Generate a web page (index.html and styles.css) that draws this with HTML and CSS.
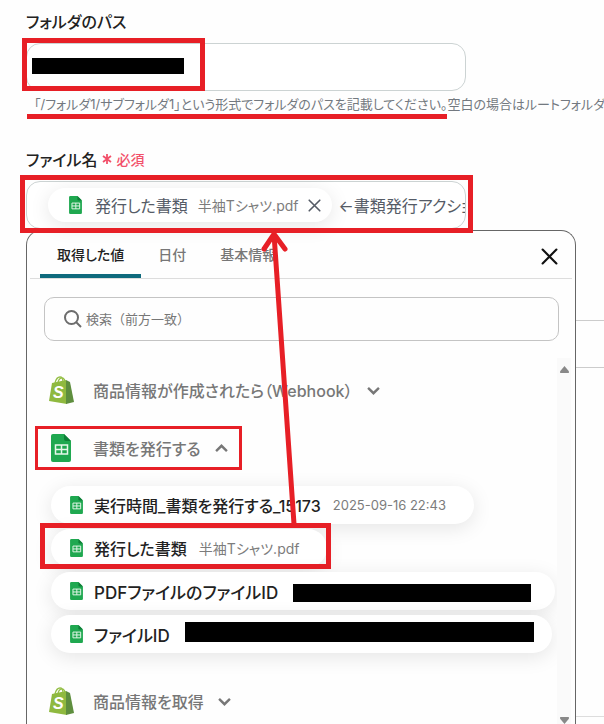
FILE: index.html
```
<!DOCTYPE html>
<html lang="ja">
  <head>
    <meta charset="UTF-8" />
    <meta name="viewport" content="width=device-width, initial-scale=1.0" />
    <title>ファイルアップロード設定</title>
    <link rel="stylesheet" href="styles.css">
  </head>
  <body>
    <!-- shared icons -->
    <svg class="sprite" aria-hidden="true">
      <symbol id="sheet" viewBox="0 0 20 28">
        <path d="M2 0h11l7 7v19a2 2 0 0 1-2 2H2a2 2 0 0 1-2-2V2a2 2 0 0 1 2-2z" fill="#1fa850"/>
        <path d="M13 0l7 7h-5a2 2 0 0 1-2-2z" fill="#0f7f38"/>
        <path d="M4.500 11h12v9h-12zM4.500 15.500h12M10.500 11v9" fill="none" stroke="#e6f7ea" stroke-width="1.500"/>
      </symbol>
      <symbol id="shop" viewBox="0 0 25 28">
        <path d="M6 7c1-4 3-6 5-6s3 2 3 5M9 6c1-3 3-5 5-4s2 2 2 4" fill="none" stroke="#95bf47" stroke-width="1.300"/>
        <path d="M3 7l14-3 1 24L0 25z" fill="#8fb93f"/>
        <path d="M17 4l4 2 4 20-8 2z" fill="#5e8e3e"/>
        <text x="4" y="22" font-size="16" font-weight="700" font-style="italic" font-family="Liberation Sans, sans-serif" fill="#fff">S</text>
      </symbol>
      <symbol id="cross" viewBox="0 0 16 16">
        <path d="M1.500 1.500l13 13M14.500 1.500l-13 13" fill="none" stroke="currentColor" stroke-width="2" stroke-linecap="round"/>
      </symbol>
      <symbol id="chevron" viewBox="0 0 12 8">
        <path d="M1 1.500l5 5 5-5" fill="none" stroke="currentColor" stroke-width="2.200"/>
      </symbol>
    </svg>

    <main class="page">
      <section class="field">
        <label class="label" for="path">フォルダのパス</label>
        <div class="box">
          <input class="box-input" id="path" type="text">
          <span class="mask mask-path"></span>
          <span class="mark mark-path"></span>
        </div>
        <p class="help"><span class="underlined">「/フォルダ1/サブフォルダ1」という形式でフォルダのパスを記載してください。</span>空白の場合はルートフォルダへ</p>
      </section>

      <section class="field field-name">
        <label class="label" for="name">ファイル名 <span class="required"><svg class="star" viewBox="0 0 10 10"><path d="M5 0v10M1 2l8 6M9 2L1 8" stroke="currentColor" stroke-width="1.800"/></svg>必須</span></label>
        <div class="box">
          <span class="chip">
            <svg class="icon-small"><use href="#sheet"/></svg>
            発行した書類
            <small class="value">半袖Tシャツ.pdf</small>
            <button class="chip-remove" type="button" aria-label="削除"><svg><use href="#cross"/></svg></button>
          </span>
          <input class="box-input" id="name" type="text" value="←書類発行アクション">
          <span class="mark mark-name"></span>
        </div>
      </section>

      <div class="behind-box"></div>
      <div class="behind-line"></div>

      <div class="panel">
        <div class="tabs">
          <button class="tab active" type="button">取得した値</button>
          <button class="tab" type="button">日付</button>
          <button class="tab" type="button">基本情報</button>
          <button class="close" type="button" aria-label="閉じる"><svg><use href="#cross"/></svg></button>
        </div>
        <div class="search">
          <svg class="search-icon" viewBox="0 0 18 18"><circle cx="7.500" cy="7.500" r="6.500" fill="none" stroke="currentColor" stroke-width="2"/><path d="M12 12l5 5" stroke="currentColor" stroke-width="2"/></svg>
          <input class="search-input" type="search" placeholder="検索（前方一致）" aria-label="検索">
        </div>
        <div class="scroll-area">
          <div class="list">
            <button class="group" type="button">
              <svg class="icon-shop"><use href="#shop"/></svg>
              <span>商品情報が作成されたら（Webhook）</span>
              <svg class="chevron"><use href="#chevron"/></svg>
            </button>
            <button class="group" type="button">
              <svg class="icon-sheet"><use href="#sheet"/></svg>
              <span>書類を発行する</span>
              <svg class="chevron up"><use href="#chevron"/></svg>
              <span class="mark mark-group"></span>
            </button>
            <div class="items">
              <button class="item" type="button">
                <svg class="icon-small"><use href="#sheet"/></svg>
                <span>実行時間_書類を発行する_15173</span>
                <small class="value date">2025-09-16 22:43</small>
              </button>
              <button class="item" type="button">
                <svg class="icon-small"><use href="#sheet"/></svg>
                <span>発行した書類</span>
                <small class="value">半袖Tシャツ.pdf</small>
                <span class="mark mark-item"></span>
              </button>
              <button class="item item-id item-pdf" type="button">
                <svg class="icon-small"><use href="#sheet"/></svg>
                <span>PDFファイルのファイルID</span>
                <span class="mask mask-pdf"></span>
              </button>
              <button class="item item-id item-file" type="button">
                <svg class="icon-small"><use href="#sheet"/></svg>
                <span>ファイルID</span>
                <span class="mask mask-file"></span>
              </button>
            </div>
            <button class="group" type="button">
              <svg class="icon-shop"><use href="#shop"/></svg>
              <span>商品情報を取得</span>
              <svg class="chevron"><use href="#chevron"/></svg>
            </button>
          </div>
          <div class="scrollbar">
            <svg viewBox="0 0 10 8"><path d="M5 0l5 6v2H0V6z" fill="#888"/></svg>
            <svg viewBox="0 0 10 8"><path d="M5 8l5-6V0H0v2z" fill="#888"/></svg>
          </div>
        </div>
      </div>

      <svg class="arrow" viewBox="0 0 40 296" aria-hidden="true">
        <path d="M14 4l20 290M4 19L14 4l11 15" fill="none" stroke="#e71f26" stroke-width="5" stroke-linecap="round"/>
      </svg>
    </main>
  </body>
</html>
```

FILE: styles.css
```
* {
  box-sizing: border-box;
}
body {
  margin: 0;
  background: #fefefe;
  color: #222;
  font-family: Inter, "Noto Sans CJK JP", sans-serif;
  font-size: 16px;
  font-feature-settings: "palt";
  overflow: hidden;
}
button,
input {
  font: inherit;
  font-feature-settings: inherit;
  color: inherit;
  border: 0;
  padding: 0;
  background: none;
}
button {
  cursor: pointer;
}
svg {
  display: block;
  flex: none;
}
.sprite {
  display: none;
}
.page {
  position: relative;
  height: 100vh;
  min-height: 724px;
  padding: 10px 0 0 26px;
  overflow: hidden;
}

/* form fields */
.field {
  height: 138px;
}
.label {
  display: flex;
  align-items: center;
  gap: 5px;
  height: 22px;
  margin-bottom: 11px;
  font-weight: 500;
}
.required {
  display: flex;
  align-items: center;
  gap: 4px;
  color: #f2506a;
  font-size: 14px;
}
.star {
  width: 10px;
  height: 10px;
}
.box {
  position: relative;
  display: flex;
  align-items: center;
  max-width: 440px;
  height: 48px;
  border: 1px solid #ccd3d3;
  border-radius: 14px;
  background: #fff;
}
.box-input {
  flex: 1;
  min-width: 0;
  height: 32px;
  padding-left: 6px;
  color: #555b66;
  outline: none;
}
.help {
  margin: 3px 0 0 1px;
  color: #737980;
  font-size: 13px;
  line-height: 20px;
  white-space: nowrap;
}
.underlined {
  display: inline-block;
  height: 25px;
  padding-left: 7px;
  border-bottom: 5px solid #e71f26;
}
.chip {
  display: flex;
  align-items: center;
  height: 34px;
  margin-left: 21px;
  padding: 0 11px 0 21px;
  border-radius: 17px;
  background: #fff;
  box-shadow: 0 4px 20px rgba(0, 0, 0, 0.1);
  color: #555b66;
  white-space: nowrap;
}
.value {
  margin-left: 12px;
  color: #7c7c7c;
  font-size: 14px;
  font-weight: 400;
}
.date {
  font-size: 13px;
}
.icon-small {
  width: 13px;
  height: 18px;
  margin-right: 13px;
}
.chip .value {
  margin-left: 10px;
}
.chip-remove {
  margin-left: 10px;
}
.chip-remove svg {
  width: 13px;
  height: 13px;
}

/* settings that continue under the panel */
.behind-box {
  height: 48px;
  margin-top: 34px;
  border: solid #ccc;
  border-width: 1px 0;
}
.behind-line {
  margin-top: 348px;
  border-top: 1px solid #ddd;
}

/* value picker */
.panel {
  position: absolute;
  top: 230px;
  bottom: 0;
  left: 26px;
  right: 28px;
  display: flex;
  flex-direction: column;
  border: 1px solid #666;
  border-bottom: 0;
  border-radius: 15px 15px 0 0;
  background: #fefefe;
}
.tabs {
  display: flex;
  height: 48px;
  margin: 0 3px;
  padding-left: 10px;
  border-bottom: 1px solid #ddd;
}
.tab {
  padding: 2px 17px 0;
  border-bottom: 4px solid transparent;
  color: #777;
  font-size: 14px;
  font-weight: 500;
}
.tab.active {
  border-color: #0f6a7d;
  border-radius: 3px 3px 0 0;
  color: #222;
}
.close {
  margin: 4px 14px 0 auto;
  color: #111;
}
.close svg {
  width: 17px;
  height: 17px;
}
.search {
  display: flex;
  align-items: center;
  gap: 4px;
  height: 44px;
  margin: 18px 16px 17px 17px;
  padding-left: 19px;
  border: 1px solid #c4c4c4;
  border-radius: 10px;
  color: #6c6c6c;
}
.search-icon {
  width: 18px;
  height: 18px;
}
.search-input {
  flex: 1;
  min-width: 0;
  height: 32px;
  outline: none;
  font-size: 13px;
  font-feature-settings: normal;
}
.search-input::placeholder {
  color: #777;
}
.scroll-area {
  display: flex;
  flex: 1;
  min-height: 0;
}
.list {
  flex: 1;
  min-width: 0;
  padding: 3px 0 0 24px;
  overflow: hidden;
}
.scrollbar {
  display: flex;
  flex-direction: column;
  justify-content: space-between;
  align-items: center;
  width: 14px;
  margin-right: 4px;
  padding-top: 8px;
  background: #fafafa;
}
.scrollbar svg {
  width: 9px;
  height: 7px;
}
.group {
  position: relative;
  display: flex;
  align-items: center;
  height: 58px;
  color: #777;
  font-weight: 500;
  white-space: nowrap;
}
.icon-shop {
  width: 25px;
  height: 28px;
  margin: 0 19px 0 -2px;
}
.icon-sheet {
  width: 20px;
  height: 28px;
  margin-right: 22px;
}
.chevron {
  width: 13px;
  height: 9px;
  margin-left: 14px;
}
.up {
  transform: scaleY(-1);
}
.items {
  display: flex;
  flex-direction: column;
  align-items: flex-start;
  gap: 5px;
  padding: 9px 0 19px;
}
.item {
  position: relative;
  display: flex;
  align-items: center;
  height: 38px;
  padding: 0 28px 0 19px;
  border-radius: 19px;
  background: #fff;
  box-shadow: 0 4px 20px rgba(0, 0, 0, 0.1);
  font-weight: 500;
  white-space: nowrap;
}
.item .icon-small {
  margin-right: 11px;
}
.item-id {
  font-size: 17px;
}
.item-pdf {
  padding-right: 24px;
}
.item-file {
  padding-right: 18px;
}

/* blacked out values */
.mask {
  background: #000;
}
.mask-path {
  position: absolute;
  top: 14px;
  left: 5px;
  width: 152px;
  height: 16px;
}
.mask-pdf {
  width: 238px;
  height: 18px;
  margin: 4px 0 0 15px;
}
.mask-file {
  width: 349px;
  height: 20px;
  margin: 0 0 4px 15px;
}

/* red annotations */
.mark {
  position: absolute;
  border: 5px solid #e71f26;
  pointer-events: none;
}
.mark-path {
  top: -6px;
  left: -5px;
  width: 183px;
  height: 53px;
}
.mark-name {
  inset: -7px -8px -5px -7px;
}
.field-name .box {
  z-index: 1;
}
.mark-group {
  inset: 7px -14px 7px -16px;
  border-width: 3px;
}
.mark-item {
  inset: -6px -4px -2px -11px;
}
.arrow {
  position: absolute;
  top: 230px;
  left: 260px;
  z-index: 2;
  width: 40px;
  height: 296px;
}
```
